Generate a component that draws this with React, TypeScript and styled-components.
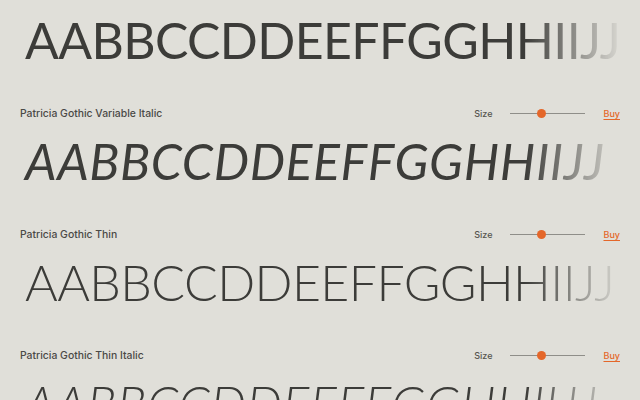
import { createGlobalStyle } from "styled-components";
import styled from "styled-components";

const GlobalStyle = createGlobalStyle`
    html, body {
        margin: 0;
        padding: 0;
        background-color: #e0dfd9;
        overflow: hidden;
    }
`

const Page = styled.main`
    width: 640px;
    height: 400px;
    overflow: hidden;
    padding-top: 10px;
    box-sizing: border-box;
    font-family: Lato, "Noto Sans", sans-serif;
    color: #3c3c39;
`

const Section = styled.section`
    display: flex;
    flex-direction: column;
    gap: 8px;
    padding: 0 0 33px;
`

const Header = styled.div`
    height: 20px;
    display: flex;
    align-items: center;
    padding: 0 20px;
    font-family: Inter, "Noto Sans", sans-serif;
`

const Name = styled.span`
    flex: 1;
    font-size: 10.4px;
    font-weight: 500;
    color: #4a4946;
`

const Controls = styled.div`
    display: flex;
    align-items: center;
    gap: 18px;
`

const SizeLabel = styled.span`
    font-size: 9px;
    font-weight: 500;
    color: #55544f;
`

const Track = styled.div`
    position: relative;
    width: 75px;
    height: 1px;
    background-color: #8f8e89;
`

const Thumb = styled.div`
    position: absolute;
    top: -4px;
    width: 9px;
    height: 9px;
    margin-left: -4.5px;
    border-radius: 50%;
    background-color: #e4672a;
`

const Buy = styled.a`
    font-size: 9px;
    font-weight: 500;
    color: #e4672a;
    text-decoration: underline;
    text-underline-offset: 2px;
    cursor: pointer;
`

const Specimen = styled.div<{ $weight: number; $italic?: boolean }>`
    height: 60px;
    padding-left: 25px;
    font-size: 50px;
    line-height: 60px;
    font-weight: ${props => props.$weight};
    font-style: ${props => props.$italic ? "italic" : "normal"};
    letter-spacing: ${props => props.$italic ? "0.6px" : "-0.6px"};
    white-space: nowrap;
    overflow: hidden;
    color: #3c3c39;
    -webkit-mask-image: linear-gradient(to right, #000 82%, rgba(0, 0, 0, 0.04) 97%);
    mask-image: linear-gradient(to right, #000 82%, rgba(0, 0, 0, 0.04) 97%);
`

const fonts = [
    { name: "Patricia Gothic Variable", weight: 400, italic: false, size: 0.42 },
    { name: "Patricia Gothic Variable Italic", weight: 400, italic: true, size: 0.42 },
    { name: "Patricia Gothic Thin", weight: 300, italic: false, size: 0.42 },
    { name: "Patricia Gothic Thin Italic", weight: 300, italic: true, size: 0.42 },
];

const sample = "AABBCCDDEEFFGGHHIIJJ";

function App() {
    return (
        <Page>
            <GlobalStyle />
            {fonts.map((font, idx) =>
                <Section key={idx}>
                    {/* the first header is scrolled out of view */}
                    {idx > 0 &&
                        <Header>
                            <Name>{font.name}</Name>
                            <Controls>
                                <SizeLabel>Size</SizeLabel>
                                <Track>
                                    <Thumb style={{ left: `${font.size * 100}%` }} />
                                </Track>
                                <Buy>Buy</Buy>
                            </Controls>
                        </Header>}
                    <Specimen $weight={font.weight} $italic={font.italic}>{sample}</Specimen>
                </Section>
            )}
        </Page>
    );
}

export default App;
